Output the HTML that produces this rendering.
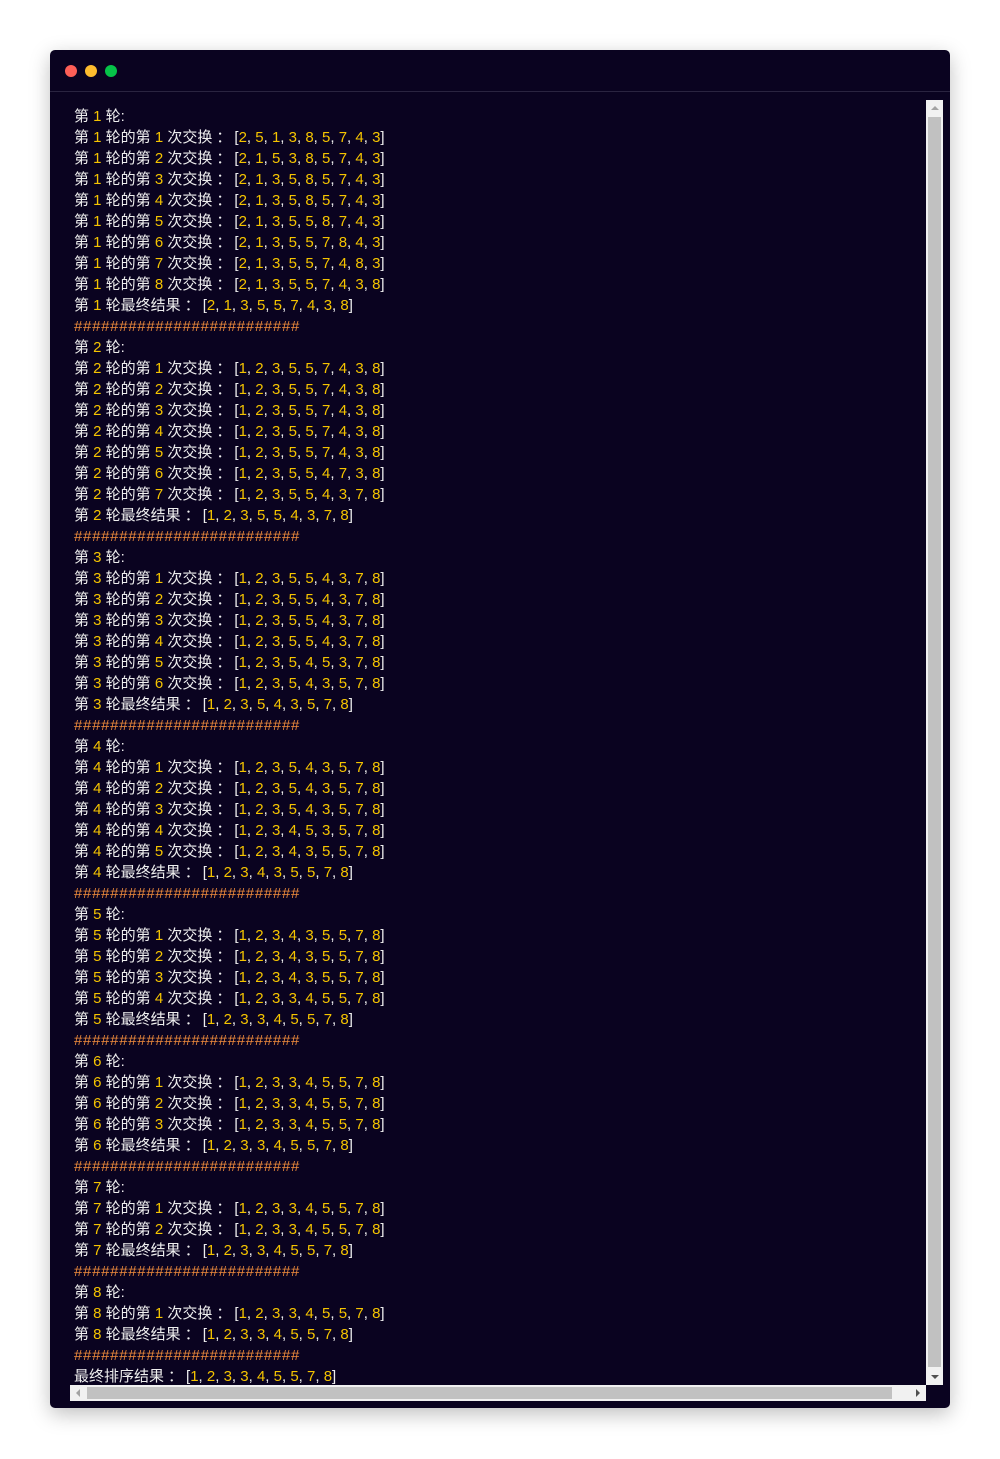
<!DOCTYPE html>
<html><head><meta charset="utf-8"><style>
html,body{margin:0;padding:0;background:#fff;width:1000px;height:1459px;overflow:hidden}
.card{position:absolute;left:50px;top:50px;width:900px;height:1358px;background:#0a0320;border-radius:5px;box-shadow:0 6px 20px rgba(0,0,0,.25);overflow:hidden}
.bar{height:41px;border-bottom:1px solid #2a2440;position:relative}
.dot{position:absolute;top:15px;width:12px;height:12px;border-radius:50%}
.code{position:absolute;left:24px;top:56px;font:15px/21px "Liberation Sans","Noto Sans CJK SC",sans-serif;color:#eeeeee;white-space:pre}
.code i{font-style:normal;color:#f5c400}
.code b{font-weight:normal;padding:0 3px 0 4px}
.h{color:#f08c3c;letter-spacing:0.7px}
.vs{position:absolute;left:876px;top:50px;width:17px;height:1285px;background:#f1f1f1}
.vs .th{position:absolute;left:2px;top:17px;width:13px;height:1250px;background:#c1c1c1}
.hs{position:absolute;left:20px;top:1335px;width:856px;height:16px;background:#f1f1f1}
.hs .th{position:absolute;left:17px;top:2px;width:805px;height:12px;background:#c1c1c1}
</style></head><body>
<div class="card">
<div class="bar"><div class="dot" style="left:15px;background:#fe5f57"></div><div class="dot" style="left:35px;background:#febc2e"></div><div class="dot" style="left:55px;background:#06c348"></div></div>
<div class="code">第 <i>1</i> 轮:
第 <i>1</i> 轮的第 <i>1</i> 次交换<b>：</b>[<i>2</i>, <i>5</i>, <i>1</i>, <i>3</i>, <i>8</i>, <i>5</i>, <i>7</i>, <i>4</i>, <i>3</i>]
第 <i>1</i> 轮的第 <i>2</i> 次交换<b>：</b>[<i>2</i>, <i>1</i>, <i>5</i>, <i>3</i>, <i>8</i>, <i>5</i>, <i>7</i>, <i>4</i>, <i>3</i>]
第 <i>1</i> 轮的第 <i>3</i> 次交换<b>：</b>[<i>2</i>, <i>1</i>, <i>3</i>, <i>5</i>, <i>8</i>, <i>5</i>, <i>7</i>, <i>4</i>, <i>3</i>]
第 <i>1</i> 轮的第 <i>4</i> 次交换<b>：</b>[<i>2</i>, <i>1</i>, <i>3</i>, <i>5</i>, <i>8</i>, <i>5</i>, <i>7</i>, <i>4</i>, <i>3</i>]
第 <i>1</i> 轮的第 <i>5</i> 次交换<b>：</b>[<i>2</i>, <i>1</i>, <i>3</i>, <i>5</i>, <i>5</i>, <i>8</i>, <i>7</i>, <i>4</i>, <i>3</i>]
第 <i>1</i> 轮的第 <i>6</i> 次交换<b>：</b>[<i>2</i>, <i>1</i>, <i>3</i>, <i>5</i>, <i>5</i>, <i>7</i>, <i>8</i>, <i>4</i>, <i>3</i>]
第 <i>1</i> 轮的第 <i>7</i> 次交换<b>：</b>[<i>2</i>, <i>1</i>, <i>3</i>, <i>5</i>, <i>5</i>, <i>7</i>, <i>4</i>, <i>8</i>, <i>3</i>]
第 <i>1</i> 轮的第 <i>8</i> 次交换<b>：</b>[<i>2</i>, <i>1</i>, <i>3</i>, <i>5</i>, <i>5</i>, <i>7</i>, <i>4</i>, <i>3</i>, <i>8</i>]
第 <i>1</i> 轮最终结果<b>：</b>[<i>2</i>, <i>1</i>, <i>3</i>, <i>5</i>, <i>5</i>, <i>7</i>, <i>4</i>, <i>3</i>, <i>8</i>]
<span class="h">#########################</span>
第 <i>2</i> 轮:
第 <i>2</i> 轮的第 <i>1</i> 次交换<b>：</b>[<i>1</i>, <i>2</i>, <i>3</i>, <i>5</i>, <i>5</i>, <i>7</i>, <i>4</i>, <i>3</i>, <i>8</i>]
第 <i>2</i> 轮的第 <i>2</i> 次交换<b>：</b>[<i>1</i>, <i>2</i>, <i>3</i>, <i>5</i>, <i>5</i>, <i>7</i>, <i>4</i>, <i>3</i>, <i>8</i>]
第 <i>2</i> 轮的第 <i>3</i> 次交换<b>：</b>[<i>1</i>, <i>2</i>, <i>3</i>, <i>5</i>, <i>5</i>, <i>7</i>, <i>4</i>, <i>3</i>, <i>8</i>]
第 <i>2</i> 轮的第 <i>4</i> 次交换<b>：</b>[<i>1</i>, <i>2</i>, <i>3</i>, <i>5</i>, <i>5</i>, <i>7</i>, <i>4</i>, <i>3</i>, <i>8</i>]
第 <i>2</i> 轮的第 <i>5</i> 次交换<b>：</b>[<i>1</i>, <i>2</i>, <i>3</i>, <i>5</i>, <i>5</i>, <i>7</i>, <i>4</i>, <i>3</i>, <i>8</i>]
第 <i>2</i> 轮的第 <i>6</i> 次交换<b>：</b>[<i>1</i>, <i>2</i>, <i>3</i>, <i>5</i>, <i>5</i>, <i>4</i>, <i>7</i>, <i>3</i>, <i>8</i>]
第 <i>2</i> 轮的第 <i>7</i> 次交换<b>：</b>[<i>1</i>, <i>2</i>, <i>3</i>, <i>5</i>, <i>5</i>, <i>4</i>, <i>3</i>, <i>7</i>, <i>8</i>]
第 <i>2</i> 轮最终结果<b>：</b>[<i>1</i>, <i>2</i>, <i>3</i>, <i>5</i>, <i>5</i>, <i>4</i>, <i>3</i>, <i>7</i>, <i>8</i>]
<span class="h">#########################</span>
第 <i>3</i> 轮:
第 <i>3</i> 轮的第 <i>1</i> 次交换<b>：</b>[<i>1</i>, <i>2</i>, <i>3</i>, <i>5</i>, <i>5</i>, <i>4</i>, <i>3</i>, <i>7</i>, <i>8</i>]
第 <i>3</i> 轮的第 <i>2</i> 次交换<b>：</b>[<i>1</i>, <i>2</i>, <i>3</i>, <i>5</i>, <i>5</i>, <i>4</i>, <i>3</i>, <i>7</i>, <i>8</i>]
第 <i>3</i> 轮的第 <i>3</i> 次交换<b>：</b>[<i>1</i>, <i>2</i>, <i>3</i>, <i>5</i>, <i>5</i>, <i>4</i>, <i>3</i>, <i>7</i>, <i>8</i>]
第 <i>3</i> 轮的第 <i>4</i> 次交换<b>：</b>[<i>1</i>, <i>2</i>, <i>3</i>, <i>5</i>, <i>5</i>, <i>4</i>, <i>3</i>, <i>7</i>, <i>8</i>]
第 <i>3</i> 轮的第 <i>5</i> 次交换<b>：</b>[<i>1</i>, <i>2</i>, <i>3</i>, <i>5</i>, <i>4</i>, <i>5</i>, <i>3</i>, <i>7</i>, <i>8</i>]
第 <i>3</i> 轮的第 <i>6</i> 次交换<b>：</b>[<i>1</i>, <i>2</i>, <i>3</i>, <i>5</i>, <i>4</i>, <i>3</i>, <i>5</i>, <i>7</i>, <i>8</i>]
第 <i>3</i> 轮最终结果<b>：</b>[<i>1</i>, <i>2</i>, <i>3</i>, <i>5</i>, <i>4</i>, <i>3</i>, <i>5</i>, <i>7</i>, <i>8</i>]
<span class="h">#########################</span>
第 <i>4</i> 轮:
第 <i>4</i> 轮的第 <i>1</i> 次交换<b>：</b>[<i>1</i>, <i>2</i>, <i>3</i>, <i>5</i>, <i>4</i>, <i>3</i>, <i>5</i>, <i>7</i>, <i>8</i>]
第 <i>4</i> 轮的第 <i>2</i> 次交换<b>：</b>[<i>1</i>, <i>2</i>, <i>3</i>, <i>5</i>, <i>4</i>, <i>3</i>, <i>5</i>, <i>7</i>, <i>8</i>]
第 <i>4</i> 轮的第 <i>3</i> 次交换<b>：</b>[<i>1</i>, <i>2</i>, <i>3</i>, <i>5</i>, <i>4</i>, <i>3</i>, <i>5</i>, <i>7</i>, <i>8</i>]
第 <i>4</i> 轮的第 <i>4</i> 次交换<b>：</b>[<i>1</i>, <i>2</i>, <i>3</i>, <i>4</i>, <i>5</i>, <i>3</i>, <i>5</i>, <i>7</i>, <i>8</i>]
第 <i>4</i> 轮的第 <i>5</i> 次交换<b>：</b>[<i>1</i>, <i>2</i>, <i>3</i>, <i>4</i>, <i>3</i>, <i>5</i>, <i>5</i>, <i>7</i>, <i>8</i>]
第 <i>4</i> 轮最终结果<b>：</b>[<i>1</i>, <i>2</i>, <i>3</i>, <i>4</i>, <i>3</i>, <i>5</i>, <i>5</i>, <i>7</i>, <i>8</i>]
<span class="h">#########################</span>
第 <i>5</i> 轮:
第 <i>5</i> 轮的第 <i>1</i> 次交换<b>：</b>[<i>1</i>, <i>2</i>, <i>3</i>, <i>4</i>, <i>3</i>, <i>5</i>, <i>5</i>, <i>7</i>, <i>8</i>]
第 <i>5</i> 轮的第 <i>2</i> 次交换<b>：</b>[<i>1</i>, <i>2</i>, <i>3</i>, <i>4</i>, <i>3</i>, <i>5</i>, <i>5</i>, <i>7</i>, <i>8</i>]
第 <i>5</i> 轮的第 <i>3</i> 次交换<b>：</b>[<i>1</i>, <i>2</i>, <i>3</i>, <i>4</i>, <i>3</i>, <i>5</i>, <i>5</i>, <i>7</i>, <i>8</i>]
第 <i>5</i> 轮的第 <i>4</i> 次交换<b>：</b>[<i>1</i>, <i>2</i>, <i>3</i>, <i>3</i>, <i>4</i>, <i>5</i>, <i>5</i>, <i>7</i>, <i>8</i>]
第 <i>5</i> 轮最终结果<b>：</b>[<i>1</i>, <i>2</i>, <i>3</i>, <i>3</i>, <i>4</i>, <i>5</i>, <i>5</i>, <i>7</i>, <i>8</i>]
<span class="h">#########################</span>
第 <i>6</i> 轮:
第 <i>6</i> 轮的第 <i>1</i> 次交换<b>：</b>[<i>1</i>, <i>2</i>, <i>3</i>, <i>3</i>, <i>4</i>, <i>5</i>, <i>5</i>, <i>7</i>, <i>8</i>]
第 <i>6</i> 轮的第 <i>2</i> 次交换<b>：</b>[<i>1</i>, <i>2</i>, <i>3</i>, <i>3</i>, <i>4</i>, <i>5</i>, <i>5</i>, <i>7</i>, <i>8</i>]
第 <i>6</i> 轮的第 <i>3</i> 次交换<b>：</b>[<i>1</i>, <i>2</i>, <i>3</i>, <i>3</i>, <i>4</i>, <i>5</i>, <i>5</i>, <i>7</i>, <i>8</i>]
第 <i>6</i> 轮最终结果<b>：</b>[<i>1</i>, <i>2</i>, <i>3</i>, <i>3</i>, <i>4</i>, <i>5</i>, <i>5</i>, <i>7</i>, <i>8</i>]
<span class="h">#########################</span>
第 <i>7</i> 轮:
第 <i>7</i> 轮的第 <i>1</i> 次交换<b>：</b>[<i>1</i>, <i>2</i>, <i>3</i>, <i>3</i>, <i>4</i>, <i>5</i>, <i>5</i>, <i>7</i>, <i>8</i>]
第 <i>7</i> 轮的第 <i>2</i> 次交换<b>：</b>[<i>1</i>, <i>2</i>, <i>3</i>, <i>3</i>, <i>4</i>, <i>5</i>, <i>5</i>, <i>7</i>, <i>8</i>]
第 <i>7</i> 轮最终结果<b>：</b>[<i>1</i>, <i>2</i>, <i>3</i>, <i>3</i>, <i>4</i>, <i>5</i>, <i>5</i>, <i>7</i>, <i>8</i>]
<span class="h">#########################</span>
第 <i>8</i> 轮:
第 <i>8</i> 轮的第 <i>1</i> 次交换<b>：</b>[<i>1</i>, <i>2</i>, <i>3</i>, <i>3</i>, <i>4</i>, <i>5</i>, <i>5</i>, <i>7</i>, <i>8</i>]
第 <i>8</i> 轮最终结果<b>：</b>[<i>1</i>, <i>2</i>, <i>3</i>, <i>3</i>, <i>4</i>, <i>5</i>, <i>5</i>, <i>7</i>, <i>8</i>]
<span class="h">#########################</span>
最终排序结果<b>：</b>[<i>1</i>, <i>2</i>, <i>3</i>, <i>3</i>, <i>4</i>, <i>5</i>, <i>5</i>, <i>7</i>, <i>8</i>]</div>
<div class="vs"><div style="position:absolute;left:5px;top:6px;border-left:4px solid transparent;border-right:4px solid transparent;border-bottom:4px solid #a3a3a3"></div><div class="th"></div><div style="position:absolute;left:5px;bottom:6px;border-left:4px solid transparent;border-right:4px solid transparent;border-top:4px solid #505050"></div></div>
<div class="hs"><div style="position:absolute;left:6px;top:4px;border-top:4px solid transparent;border-bottom:4px solid transparent;border-right:4px solid #a3a3a3"></div><div class="th"></div><div style="position:absolute;right:6px;top:4px;border-top:4px solid transparent;border-bottom:4px solid transparent;border-left:4px solid #505050"></div></div>
</div>
</body></html>
